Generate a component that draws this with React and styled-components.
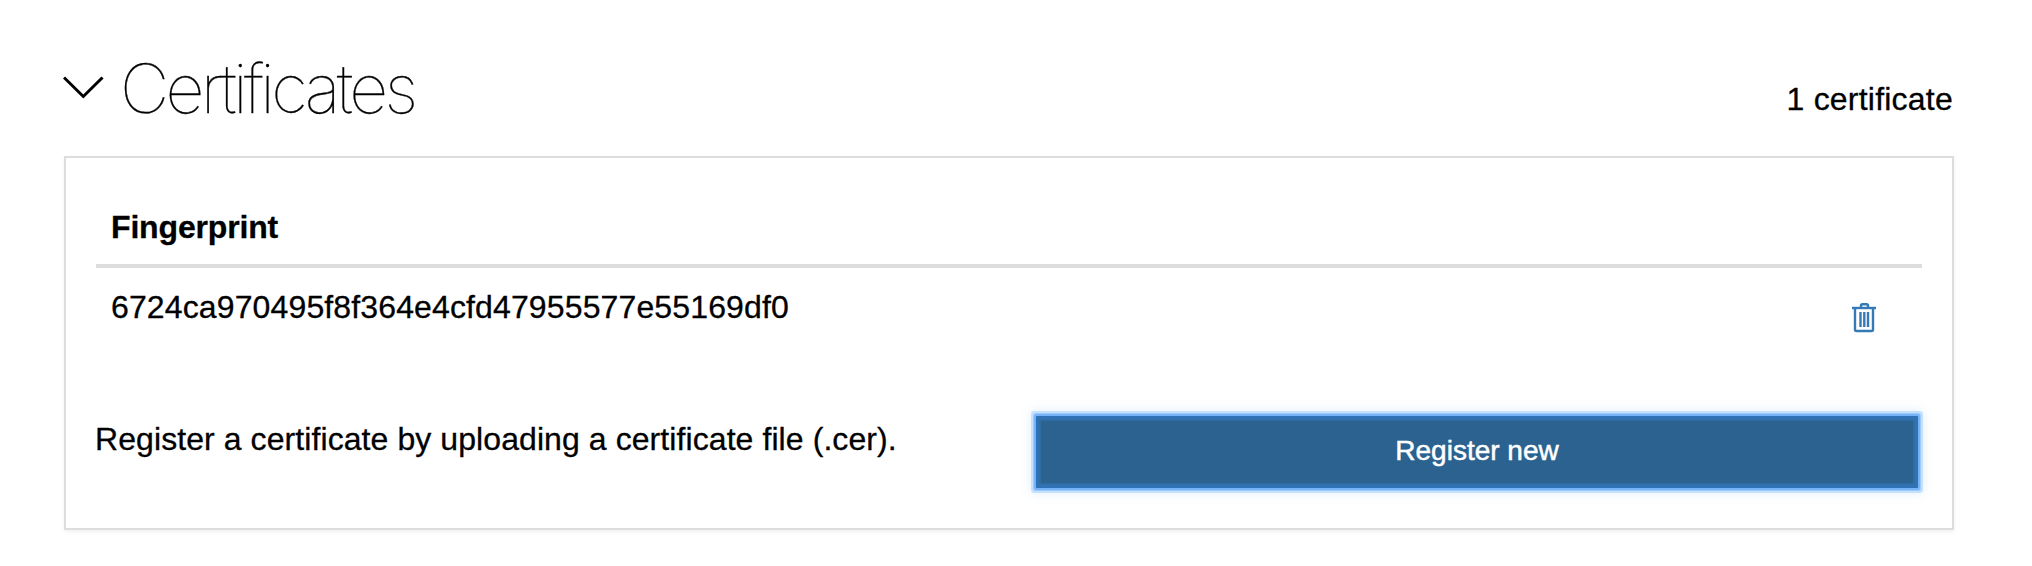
import React from "react";
import styled, { createGlobalStyle } from "styled-components";

const GlobalStyle = createGlobalStyle`
  * { box-sizing: border-box; }
  body {
    margin: 0;
    background: #fff;
    color: #000;
    font: 32px/44px "Liberation Sans", Arial, sans-serif;
  }
`;

const Section = styled.section`
  width: 2032px;
  height: 566px;
  padding: 44px 78px 0 63px;
`;

const Header = styled.header`
  display: flex;
  align-items: flex-start;
  height: 112px;
  padding-right: 1px;
`;

const Chevron = styled.svg`
  width: 42px;
  height: 26px;
  margin-top: 31px;
`;

const Title = styled.h2`
  margin: 0 auto 0 15px;
  font-family: Inter, "Liberation Sans", sans-serif;
  font-size: 68px;
  font-weight: 100;
  line-height: 88px;
  letter-spacing: -3.65px;
  white-space: nowrap;
  -webkit-text-stroke: 0.3px #000;
`;

const Text = styled.span`
  letter-spacing: ${(p) => p.$tracking};
  -webkit-text-stroke: 0.3px currentColor;
`;

const Count = styled(Text)`
  margin-top: 33px;
`;

const Card = styled.div`
  width: 1890px;
  height: 374px;
  margin-left: 1px;
  padding: 47px 30px 0;
  border: 2px solid #ddd;
  box-shadow: 0 2px 4px rgba(0, 0, 0, 0.06);
`;

const TableHead = styled.div`
  height: 63px;
  padding-left: 15px;
  border-bottom: 4px solid #ddd;
  font-weight: bold;
`;

const TableRow = styled.div`
  display: flex;
  justify-content: space-between;
  height: 136px;
  padding: 17px 45px 0 15px;
`;

const IconButton = styled.button`
  width: 26px;
  height: 32px;
  margin-top: 17px;
  padding: 0;
  border: 0;
  background: none;
  color: #337ab7;

  svg { display: block; }
`;

const Footer = styled.div`
  display: flex;
  justify-content: space-between;
  padding-right: 4px;
`;

const Hint = styled.p`
  margin: 13px 0 0 -1px;
`;

const PrimaryButton = styled.button`
  width: 882px;
  height: 72px;
  margin-top: 12px;
  padding: 0 0 2px;
  border: 2px solid #2f72b4;
  border-radius: 1px;
  background: #2b628f;
  color: #fff;
  font: 28px/40px "Liberation Sans", Arial, sans-serif;
  -webkit-text-stroke: 0.5px #fff;
  box-shadow: inset 0 0 0 1px #3173b6, inset 0 0 0 3px #2f6da5,
    0 0 0 2px #77b4f7, 0 0 0 3px #9ccafa, 0 0 0 5px #c5e1fd,
    0 0 12px 4px rgba(102, 175, 233, 0.25);
`;

function TrashIcon() {
  return (
    <svg width="26" height="32" viewBox="0 0 26 32" fill="none" stroke="currentColor" strokeWidth="2.4">
      <path d="M1 6h24" />
      <path d="M10 6V3.500Q10 2.200 11.300 2.200h4.400Q17 2.200 17 3.500V6" />
      <path d="M4 6v21.500Q4 29 5.500 29h15Q22 29 22 27.500V6" />
      <path d="M9.500 10v15M13.300 10v15M17 10v15" />
    </svg>
  );
}

export default function App() {
  return (
    <>
      <GlobalStyle />
      <Section>
        <Header>
          <Chevron viewBox="0 0 42 26" fill="none" stroke="#000" strokeWidth="3">
            <path d="M1 2.500L20.300 21.500L39.500 2.500" />
          </Chevron>
          <Title>Certificates</Title>
          <Count $tracking="0.22px">1 certificate</Count>
        </Header>
        <Card>
          <TableHead>
            <Text $tracking="-0.16px">Fingerprint</Text>
          </TableHead>
          <TableRow>
            <Text $tracking="0.13px">6724ca970495f8f364e4cfd47955577e55169df0</Text>
            <IconButton aria-label="Delete certificate">
              <TrashIcon />
            </IconButton>
          </TableRow>
          <Footer>
            <Hint>
              <Text $tracking="0.08px">Register a certificate by uploading a certificate file (.cer).</Text>
            </Hint>
            <PrimaryButton>Register new</PrimaryButton>
          </Footer>
        </Card>
      </Section>
    </>
  );
}
